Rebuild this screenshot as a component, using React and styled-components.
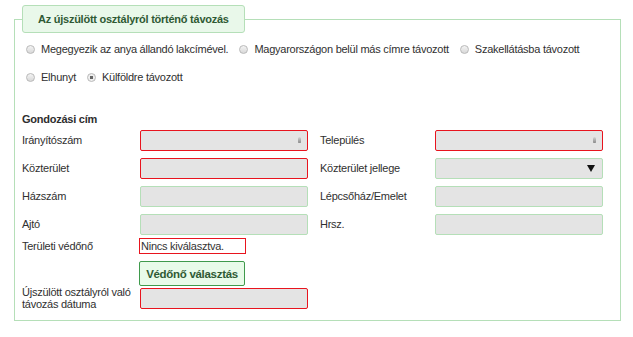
import React from "react";
import styled, {createGlobalStyle} from "styled-components";

const GlobalStyle = createGlobalStyle`
  body {
    margin: 0;
    background: #fff;
    font-family: Tahoma, "Liberation Sans", Arial, sans-serif;
    font-size: 11px;
    letter-spacing: -0.25px;
    color: #303030;
  }
`

const Page = styled.div`
  padding: 5px 0 0 14px;
  width: 607px;
`

const Fieldset = styled.fieldset`
  margin: 0;
  padding: 0 0 10px 0;
  border: 1px solid #b5dfb8;
  min-width: 0;
`

const Legend = styled.legend`
  margin-left: 7px;
  padding: 0 15px;
  height: 26px;
  line-height: 26px;
  border: 1px solid #b5dfb8;
  border-radius: 3px;
  background: #e9f8ea;
  color: #2f5a34;
  font-size: 11px;
  font-weight: bold;
`

const RadioGroup = styled.div`
  display: flex;
  flex-wrap: wrap;
  padding: 2px 0 0 11px;
  width: 580px;
`

const RadioItem = styled.label`
  display: flex;
  align-items: center;
  height: 28px;
  margin-right: 11px;
  white-space: nowrap;
`

const RadioDot = styled.span`
  box-sizing: border-box;
  width: 9px;
  height: 9px;
  margin-right: 6px;
  border-radius: 50%;
  border: 1px solid #b9b9b9;
  background: ${p => p.checked
    ? "radial-gradient(circle, #666 0 1.5px, #eee 2px)"
    : "linear-gradient(#f4f4f4, #d8d8d8)"};
`

const SectionTitle = styled.div`
  padding: 21px 0 0 7px;
  font-weight: bold;
  color: #2e2e2e;
  height: 14px;
  line-height: 14px;
`

const Grid = styled.div`
  display: grid;
  grid-template-columns: 118px 168px 127px 168px;
  padding: 0 0 0 7px;
  align-items: center;
`

const Label = styled.div`
  min-height: ${p => p.h || 28}px;
  display: flex;
  align-items: center;
  padding-left: ${p => p.right ? "12px" : "0"};
  line-height: 12px;
`

const Input = styled.div`
  box-sizing: border-box;
  position: relative;
  height: 21px;
  width: 168px;
  border: 1px solid ${p => p.invalid ? "#e8141e" : "#b5dfb8"};
  border-radius: 2px;
  background: #e4e4e4;
`

const SpinIcon = styled.span`
  position: absolute;
  right: 6px;
  top: 6px;
  width: 3px;
  height: 6px;
  border-radius: 2px 2px 1px 1px;
  background: linear-gradient(#d4d4d4, #8a8a8a);
`

const Caret = styled.span`
  position: absolute;
  right: 7px;
  top: 6px;
  width: 0;
  height: 0;
  border-left: 4px solid transparent;
  border-right: 4px solid transparent;
  border-top: 7px solid #111;
`

const Placeholder = styled.div`
  box-sizing: border-box;
  width: 107px;
  height: 16px;
  margin-left: -1px;
  border: 1px solid #e8141e;
  font-size: 11px;
  line-height: 14px;
  padding-left: 1px;
  color: #333;
  background: #fff;
`

const Button = styled.button`
  box-sizing: border-box;
  width: 106px;
  height: 25px;
  margin: 7px 0 0 -1px;
  padding: 0;
  border: 1px solid #3f9a4c;
  border-radius: 2px;
  background: #e8fbe9;
  color: #2f5a34;
  font-family: inherit;
  font-size: 11.5px;
  letter-spacing: -0.3px;
  font-weight: bold;
  display: block;
`

function App() {
    const left = [
        ["Irányítószám", true, "spin"],
        ["Közterület", true, null],
        ["Házszám", false, null],
        ["Ajtó", false, null],
    ]
    const right = [
        ["Település", true, "spin"],
        ["Közterület jellege", false, "caret"],
        ["Lépcsőház/Emelet", false, null],
        ["Hrsz.", false, null],
    ]

    return (
        <Page>
            <GlobalStyle/>
            <Fieldset>
                <Legend>Az újszülött osztályról történő távozás</Legend>
                <RadioGroup>
                    <RadioItem><RadioDot/>Megegyezik az anya állandó lakcímével.</RadioItem>
                    <RadioItem><RadioDot/>Magyarországon belül más címre távozott</RadioItem>
                    <RadioItem><RadioDot/>Szakellátásba távozott</RadioItem>
                    <RadioItem><RadioDot/>Elhunyt</RadioItem>
                    <RadioItem><RadioDot checked/>Külföldre távozott</RadioItem>
                </RadioGroup>
                <SectionTitle>Gondozási cím</SectionTitle>
                <Grid>
                    {left.map((l, i) => (
                        <React.Fragment key={l[0]}>
                            <Label>{l[0]}</Label>
                            <Input invalid={l[1]}>
                                {l[2] === "spin" && <SpinIcon/>}
                            </Input>
                            <Label right>{right[i][0]}</Label>
                            <Input invalid={right[i][1]}>
                                {right[i][2] === "spin" && <SpinIcon/>}
                                {right[i][2] === "caret" && <Caret/>}
                            </Input>
                        </React.Fragment>
                    ))}
                    <Label h={16}>Területi védőnő</Label>
                    <Placeholder>Nincs kiválasztva.</Placeholder>
                    <span/>
                    <span/>
                    <span/>
                    <div><Button>Védőnő választás</Button></div>
                    <span/>
                    <span/>
                    <Label h={24}>Újszülött osztályról való távozás dátuma</Label>
                    <Input invalid/>
                </Grid>
            </Fieldset>
        </Page>
    );
}

export default App;
